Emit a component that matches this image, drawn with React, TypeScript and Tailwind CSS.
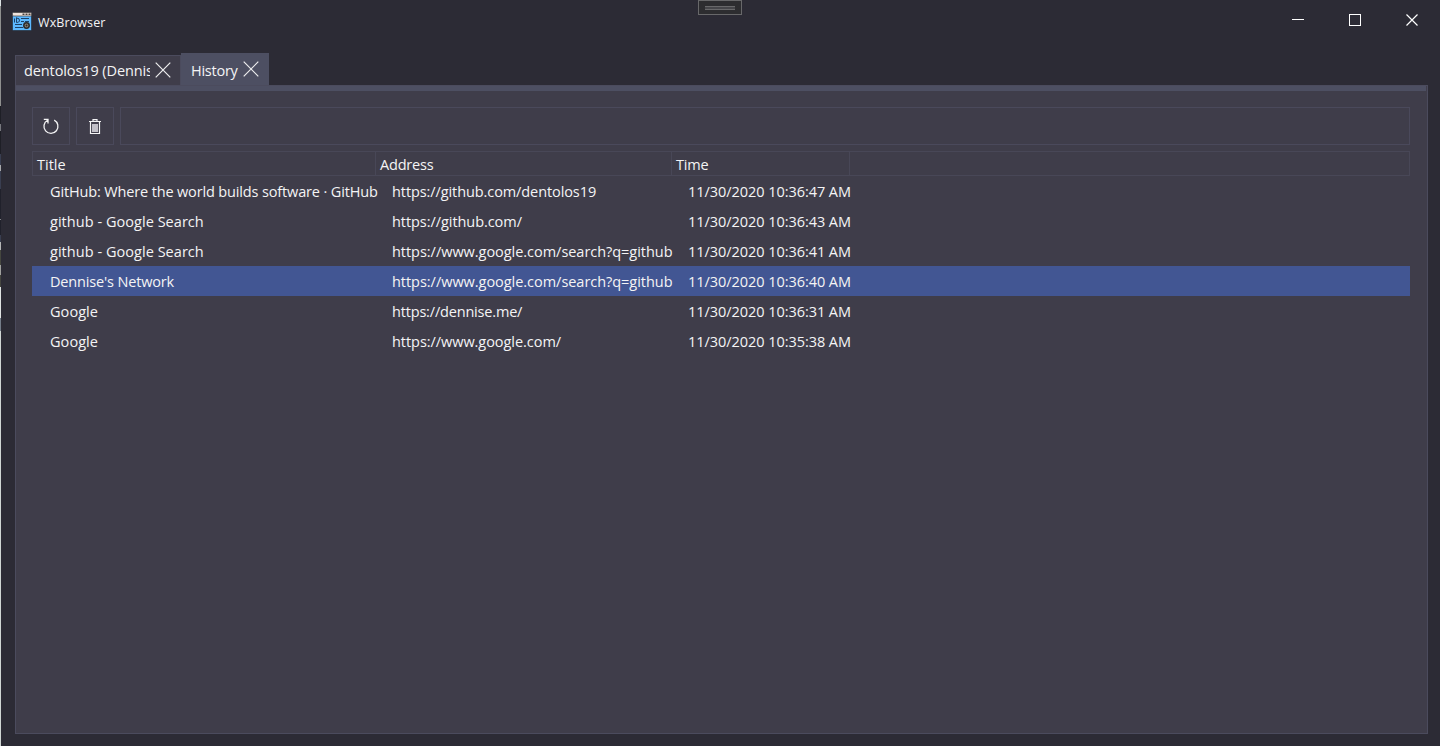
import React from "react";

const history = [
  { title: "GitHub: Where the world builds software · GitHub", address: "https://github.com/dentolos19", time: "11/30/2020 10:36:47 AM", tt: "tracking-[-0.145px]", at: "tracking-[-0.09px]" },
  { title: "github - Google Search", address: "https://github.com/", time: "11/30/2020 10:36:43 AM", tt: "tracking-[0.04px]", at: "tracking-[-0.06px]" },
  { title: "github - Google Search", address: "https://www.google.com/search?q=github", time: "11/30/2020 10:36:41 AM", tt: "tracking-[0.04px]", at: "tracking-[-0.035px]" },
  { title: "Dennise's Network", address: "https://www.google.com/search?q=github", time: "11/30/2020 10:36:40 AM", tt: "tracking-[-0.16px]", at: "tracking-[-0.035px]", selected: true },
  { title: "Google", address: "https://dennise.me/", time: "11/30/2020 10:36:31 AM", tt: "tracking-[0.06px]", at: "tracking-[-0.18px]" },
  { title: "Google", address: "https://www.google.com/", time: "11/30/2020 10:35:38 AM", tt: "tracking-[0.06px]", at: "tracking-[-0.05px]" },
];

function AppLogo() {
  return (
    <svg width="20" height="19" viewBox="0 0 20 19" className="shrink-0">
      <rect x="0.5" y="0.5" width="19" height="18" rx="1" fill="#5cb8ff" stroke="#26313e" strokeWidth=".7" />
      <rect x="0.5" y="0.5" width="19" height="3.500" rx="1" fill="#efe3dc" stroke="#453d3b" strokeWidth=".7" />
      <path d="M10.500 2.300h2M13.500 2.300h2M16.500 2.300h2" stroke="#47403e" strokeWidth="1.600" />
      <path d="M2.500 6.500v4M4.500 5.500v5M4.500 6q3.500 0 3 3q-.5 1.500-3 1.500M9 6.500h8M9 9.500h3M13 9.500h4M3 12.500h7M3 15.500h8" stroke="#1d4167" fill="none" />
      <circle cx="14.500" cy="13.500" r="2.700" fill="#8b8174" stroke="#292a2d" strokeWidth="1.500" />
      <circle cx="14.500" cy="13.500" r="1" fill="#292a2d" />
    </svg>
  );
}

function CloseMark() {
  return (
    <svg width="16" height="16" viewBox="0 0 16 16" className="shrink-0">
      <path d="M.7.7 15.300 15.300M15.300.7.7 15.300" stroke="#eeeeef" strokeWidth="1.200" />
    </svg>
  );
}

function DesktopEdge() {
  return (
    <div className="flex h-full w-px shrink-0 flex-col">
      <div className="h-[6px] bg-[#dce2e4]" />
      <div className="h-[100px] bg-[#8f908f]" />
      <div className="h-[18px] bg-[#1e1f26]" />
      <div className="h-[7px] bg-[#77787e]" />
      <div className="h-[23px] bg-[#1e1f26]" />
      <div className="h-[11px] bg-[#393e50]" />
      <div className="h-[6px] bg-[#a8a9ab]" />
      <div className="h-[18px] bg-[#393e50]" />
      <div className="h-[30px] bg-[#20212b]" />
      <div className="h-px bg-[#85868a]" />
      <div className="h-[15px] bg-[#20212b]" />
      <div className="h-[7px] bg-[#393e50]" />
      <div className="h-[8px] bg-[#b5b6b6]" />
      <div className="h-[15px] bg-[#45473f]" />
      <div className="h-[10px] bg-[#a0a19f]" />
      <div className="h-[12px] bg-[#44453f]" />
      <div className="h-[31px] bg-[#dfe3e2]" />
      <div className="h-[13px] bg-[#747d89]" />
      <div className="flex-1 bg-[#d0d6d4]" />
    </div>
  );
}

export default function App() {
  return (
    <div className="relative flex h-[746px] w-[1440px] overflow-hidden bg-[#2c2b35] font-['Open_Sans',sans-serif] text-[14.5px] text-[#f4f4f5]">
      <DesktopEdge />
      <div className="absolute left-[698px] top-0 flex h-[15px] w-[44px] items-center justify-center border border-[#68686a] bg-[#2d2d30]">
        <div className="h-[4px] w-[30px] border-y border-[#68686a] bg-[#46464a]" />
      </div>
      <div className="flex min-w-0 flex-1 flex-col">
        <header className="flex h-[53px] shrink-0 items-start justify-between pl-[11px] pr-[22px]">
          <div className="flex items-center gap-[6px] pt-[12px]">
            <AppLogo />
            <span className="h-[19px] text-[12.5px] leading-[21px] tracking-[0.1px]">WxBrowser</span>
          </div>
          <div className="flex gap-[45px] pt-[14px]">
            <svg width="12" height="12" viewBox="0 0 12 12"><path d="M0 5.500H12" stroke="white" /></svg>
            <svg width="12" height="12" viewBox="0 0 12 12"><rect x=".5" y=".5" width="11" height="11" fill="none" stroke="white" /></svg>
            <svg width="12" height="12" viewBox="0 0 12 12"><path d="M.5.5 11.500 11.500M11.500.5.5 11.500" stroke="white" strokeWidth="1.200" /></svg>
          </div>
        </header>

        <nav className="flex h-[32px] shrink-0 items-end pl-[14px]">
          <div className="flex h-[30px] w-[166px] items-center border border-b-0 border-[#4b4b5d] bg-[#3f3d4a] pl-[8px]">
            <span className="w-[126px] overflow-hidden whitespace-nowrap tracking-[-0.1px]">dentolos19 (Dennise)</span>
            <span className="ml-[5px] pb-[2px]"><CloseMark /></span>
          </div>
          <div className="flex h-[32px] w-[88px] items-center bg-[#4d4f62] pl-[10px]">
            <span className="w-[52px] whitespace-nowrap pt-[3px] tracking-[-0.25px]">History</span>
            <CloseMark />
          </div>
        </nav>

        <main className="ml-[14px] flex h-[649px] w-[1413px] shrink-0 flex-col border border-[#4b4b5d] bg-[#3f3d4a]">
          <div className="mr-px h-[5px] shrink-0 bg-[#4d4f62]" />
          <div className="flex flex-col pl-[16px] pr-[17px] pt-[16px]">
            <div className="flex h-[38px] gap-[6px]">
              <button className="flex w-[38px] items-center justify-center border border-[#4a495b]">
                <svg width="18" height="18" viewBox="0 0 18 18" fill="none" stroke="#f4f4f5" strokeWidth="1.300">
                  <path d="M12.200 3.200A7 7 0 1 1 5.500 3.300M1.800 2.400H6V6.500" />
                </svg>
              </button>
              <button className="flex w-[38px] items-center justify-center border border-[#4a495b] pt-[2px]">
                <svg width="12" height="16" viewBox="0 0 12 16" fill="none" stroke="#f4f4f5" strokeWidth="1.200">
                  <path d="M0 2.500H12M4 2V.7H8V2M1.500 3V14.500H10.500V3" />
                  <rect x="3" y="5" width="6" height="8" fill="#c1bfc7" stroke="none" />
                </svg>
              </button>
              <div className="flex-1 border border-[#4a495b]" />
            </div>

            <div className="mt-[6px] flex h-[25px] border border-[#484757] leading-[26px]">
              <div className="w-[343px] border-r border-[#484757] pl-[4px]">Title</div>
              <div className="w-[296px] border-r border-[#484757] pl-[4px] tracking-[-0.2px]">Address</div>
              <div className="w-[178px] border-r border-[#484757] pl-[4px] tracking-[-0.2px]">Time</div>
            </div>

            <div>
              {history.map((row, index) => (
                <div key={index} className={`flex h-[30px] whitespace-nowrap pl-[18px] leading-[32px] ${row.selected ? "bg-[#425693]" : ""}`}>
                  <div className="w-[342px] shrink-0"><span className={row.tt}>{row.title}</span></div>
                  <div className="w-[296px] shrink-0"><span className={row.at}>{row.address}</span></div>
                  <div><span className="tracking-[-0.05px]">{row.time}</span></div>
                </div>
              ))}
            </div>
          </div>
        </main>
      </div>
    </div>
  );
}
